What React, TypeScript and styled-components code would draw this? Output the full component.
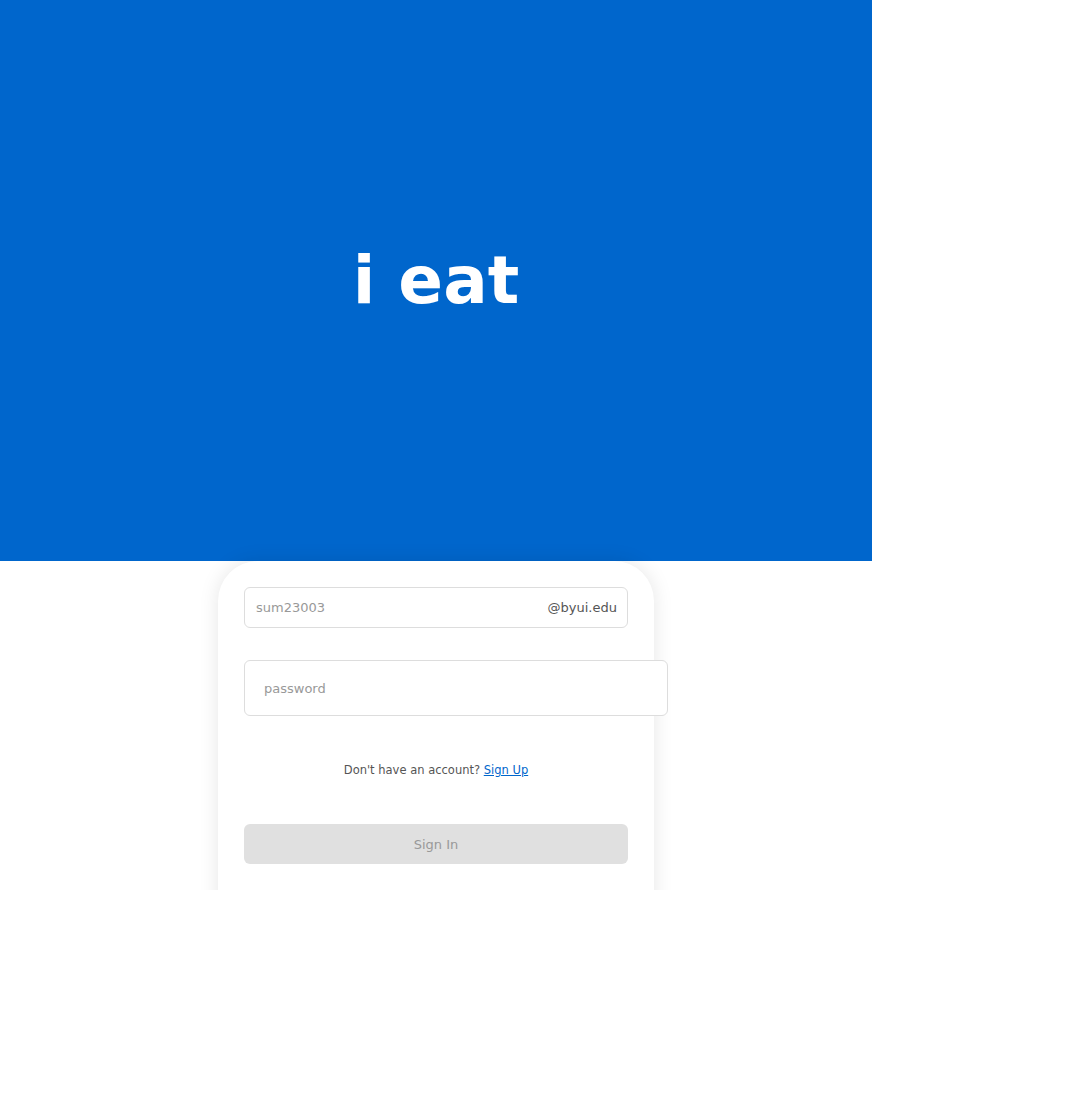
import React from "react";
import styled, { createGlobalStyle } from "styled-components";

const GlobalStyle = createGlobalStyle`
  html, body {
    margin: 0;
    padding: 0;
    background: #fff;
    font-family: "DejaVu Sans", Verdana, sans-serif;
  }
  * { box-sizing: border-box; }
`;

export default function App() {
  return (
    <>
      <GlobalStyle />
      <Screen>
        <Hero>
          <Title>i eat</Title>
        </Hero>
        <Card>
          <EmailField>
            <EmailInput placeholder="sum23003" />
            <Domain>@byui.edu</Domain>
          </EmailField>
          <PasswordInput type="password" placeholder="password" />
          <SignUpText>
            Don't have an account? <SignUpLink href="#">Sign Up</SignUpLink>
          </SignUpText>
          <SignInButton disabled>Sign In</SignInButton>
        </Card>
      </Screen>
    </>
  );
}

const Screen = styled.div`
  width: 80vw;
  height: 80vh;
  overflow: hidden;
  display: flex;
  flex-direction: column;
  align-items: center;
`;

const Hero = styled.div`
  width: 100%;
  height: 561px;
  flex-shrink: 0;
  background: #0066cc;
  display: flex;
  align-items: center;
  justify-content: center;
`;

const Title = styled.h1`
  margin: 0;
  color: #fff;
  font-size: 66px;
  font-weight: 700;
`;

const Card = styled.div`
  width: 436px;
  flex-shrink: 0;
  padding: 26px 26px 60px;
  background: #fff;
  border-radius: 40px 40px 0 0;
  box-shadow: 0 0 20px rgba(0, 0, 0, 0.1);
  display: flex;
  flex-direction: column;
`;

const EmailField = styled.div`
  display: flex;
  align-items: center;
  height: 41px;
  border: 1px solid #dddddd;
  border-radius: 6px;
  padding: 0 10px 0 11px;
`;

const EmailInput = styled.input`
  flex: 1;
  min-width: 0;
  border: none;
  outline: none;
  padding: 0;
  font-family: inherit;
  font-size: 13px;
  color: #333;
  &::placeholder { color: #999; }
`;

const Domain = styled.span`
  font-size: 13px;
  color: #555;
`;

const PasswordInput = styled.input`
  box-sizing: content-box;
  width: 100%;
  height: 14px;
  margin-top: 32px;
  padding: 20px 19px;
  border: 1px solid #dddddd;
  border-radius: 6px;
  outline: none;
  font-family: inherit;
  font-size: 13px;
  color: #333;
  &::placeholder { color: #999; }
`;

const SignUpText = styled.p`
  margin: 47px 0 0;
  text-align: center;
  font-size: 11.5px;
  color: #555;
`;

const SignUpLink = styled.a`
  color: #0066cc;
  text-decoration: underline;
`;

const SignInButton = styled.button`
  margin-top: 47px;
  height: 40px;
  width: 100%;
  border: none;
  border-radius: 6px;
  background: #e0e0e0;
  color: #999;
  font-family: inherit;
  font-size: 13px;
`;
